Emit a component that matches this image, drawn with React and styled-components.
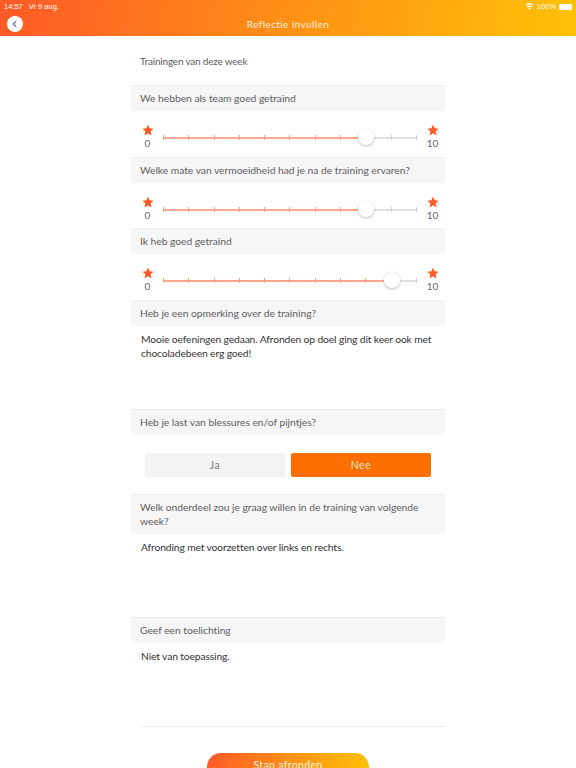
import styled, { createGlobalStyle } from "styled-components"

const GlobalStyle = createGlobalStyle`
html, body {
  margin: 0;
  padding: 0;
  height: 768px;
  overflow: hidden;
  background: white;
}
* { box-sizing: border-box; }
`
const Page = styled.div`
width: 576px;
height: 768px;
overflow: hidden;
font-family: "Lato", "Open Sans", sans-serif;
color: #606060;
`
const Header = styled.header`
height: 36px;
background: linear-gradient(95deg, #ff5a26 0%, #ff9514 55%, #ffc107 100%);
color: white;
position: relative;
`
const StatusBar = styled.div`
height: 12px;
padding: 1px 4px 0 4px;
display: flex;
justify-content: space-between;
align-items: center;
font-family: "Liberation Sans", sans-serif;
font-size: 7.5px;
color: #fff;
`
const StatusLeft = styled.div`
display: flex;
gap: 6px;
`
const StatusRight = styled.div`
display: flex;
align-items: center;
gap: 3px;
`
const Battery = styled.div`
width: 13px;
height: 6px;
border-radius: 1.5px;
background: white;
`
const HeaderRow = styled.div`
height: 23px;
display: flex;
align-items: center;
justify-content: center;
`
const Title = styled.div`
font-size: 10px;
letter-spacing: 0.4px;
color: #fff3df;
`
const BackButton = styled.button`
position: absolute;
left: 7px;
top: 16px;
width: 16px;
height: 16px;
border-radius: 50%;
border: none;
padding: 0;
background: white;
display: flex;
align-items: center;
justify-content: center;
`
const Content = styled.main`
width: 314px;
margin: 0 auto 0 131px;
`
const Intro = styled.div`
height: 49px;
padding: 19px 0 0 9px;
font-size: 10px;
line-height: 13px;
letter-spacing: -0.2px;
`
const Label = styled.div`
background: #f6f6f6;
border-top: 1px solid #ededed;
padding: 5px 18px 6px 9px;
font-size: 10.3px;
line-height: 14px;
letter-spacing: -0.03px;
`
const SliderRow = styled.div`
height: ${(p) => p.$height}px;
display: flex;
align-items: flex-start;
padding: 13px 6px 0 10px;
`
const StarColumn = styled.div`
width: 13px;
display: flex;
flex-direction: column;
align-items: center;
font-size: 10px;
line-height: 12px;
color: #666;
svg { display: block; margin-bottom: 1px; }
`
const Track = styled.div`
position: relative;
flex: 1;
height: 1.5px;
margin: 13px 9px 0 9px;
background: #e0e0e0;
display: flex;
justify-content: space-between;
`
const TrackFill = styled.div`
position: absolute;
left: 0;
top: 0;
height: 1.5px;
background: #ffa78f;
`
const Tick = styled.span`
position: relative;
width: 1px;
height: 5px;
margin-top: -1.75px;
background: ${(p) => (p.$on ? "#ff9a80" : "#cfcfcf")};
`
const Thumb = styled.span`
position: absolute;
top: -8px;
width: 16px;
height: 16px;
margin-left: -8px;
border-radius: 50%;
background: white;
box-shadow: 0 1px 3px rgba(0, 0, 0, 0.28);
`
const Answer = styled.div`
height: ${(p) => p.$height}px;
padding: ${(p) => p.$top}px 6px 0 10px;
font-size: 10.3px;
line-height: 14px;
letter-spacing: -0.13px;
color: #333;
`
const ButtonRow = styled.div`
height: 59px;
padding: 18px 14px 0 14px;
display: flex;
gap: 6px;
`
const Choice = styled.button`
flex: 1;
height: 24px;
border: none;
border-radius: 2px;
font-family: inherit;
font-size: 10.5px;
letter-spacing: 0.5px;
background: ${(p) => (p.$active ? "#ff6f00" : "#f3f3f3")};
color: ${(p) => (p.$active ? "#ffe3cc" : "#777")};
`
const Divider = styled.div`
height: 1px;
margin-left: 9px;
background: #ededed;
`
const Footer = styled.div`
display: flex;
justify-content: center;
padding: 26px 0 0 0;
`
const SubmitButton = styled.button`
width: 162px;
height: 40px;
border: none;
border-radius: 14px;
padding: 6px 0 0 0;
align-self: flex-start;
display: flex;
justify-content: center;
font-family: inherit;
font-size: 10.5px;
line-height: 13px;
letter-spacing: 0.35px;
color: #fff3df;
background: linear-gradient(95deg, #ff5a26 0%, #ff9514 55%, #ffc107 100%);
`

const Star = () => (
  <svg width="12" height="12" viewBox="0 0 24 24" fill="#ff5a26">
    <path d="M12 1l3.2 7.6 8.3.7-6.3 5.4 1.9 8.1L12 18.5 4.9 22.8l1.9-8.1L.5 9.3l8.3-.7z" />
  </svg>
)

const Slider = ({ value, height = 46 }) => {
  const pct = (value / 10) * 100
  return (
    <SliderRow $height={height}>
      <StarColumn>
        <Star />
        0
      </StarColumn>
      <Track>
        <TrackFill style={{ width: `${pct}%` }} />
        {Array.from({ length: 11 }, (_, i) => (
          <Tick key={i} $on={i <= value} />
        ))}
        <Thumb style={{ left: `${pct}%` }} />
      </Track>
      <StarColumn>
        <Star />
        10
      </StarColumn>
    </SliderRow>
  )
}

export default function App() {
  return (
    <Page>
      <GlobalStyle />
      <Header>
        <StatusBar>
          <StatusLeft>
            <span>14:57</span>
            <span>Vr 9 aug.</span>
          </StatusLeft>
          <StatusRight>
            <svg width="9" height="7" viewBox="0 0 18 14" fill="white">
              <path d="M9 14L6.4 10.6a4.4 4.4 0 0 1 5.2 0z" />
              <path d="M5.2 9.1L3.6 7a9 9 0 0 1 10.8 0l-1.6 2.1a6.4 6.4 0 0 0-7.6 0z" />
              <path d="M2.4 5.4L.8 3.3a13.6 13.6 0 0 1 16.4 0l-1.6 2.1a11 11 0 0 0-13.2 0z" />
            </svg>
            <span>100%</span>
            <Battery />
          </StatusRight>
        </StatusBar>
        <HeaderRow>
          <Title>Reflectie invullen</Title>
        </HeaderRow>
        <BackButton>
          <svg width="8" height="8" viewBox="0 0 8 8" fill="none" stroke="#5c6bc0" strokeWidth="1.2">
            <path d="M5.2 1.2L2.4 4l2.8 2.8" />
          </svg>
        </BackButton>
      </Header>
      <Content>
        <Intro>Trainingen van deze week</Intro>
        <Label>We hebben als team goed getraind</Label>
        <Slider value={8} />
        <Label>Welke mate van vermoeidheid had je na de training ervaren?</Label>
        <Slider value={8} height={45} />
        <Label>Ik heb goed getraind</Label>
        <Slider value={9} />
        <Label>Heb je een opmerking over de training?</Label>
        <Answer $height={83} $top={6}>
          Mooie oefeningen gedaan. Afronden op doel ging dit keer ook met chocoladebeen erg goed!
        </Answer>
        <Label>Heb je last van blessures en/of pijntjes?</Label>
        <ButtonRow>
          <Choice>Ja</Choice>
          <Choice $active>Nee</Choice>
        </ButtonRow>
        <Label>Welk onderdeel zou je graag willen in de training van volgende week?</Label>
        <Answer $height={83} $top={6}>Afronding met voorzetten over links en rechts.</Answer>
        <Label>Geef een toelichting</Label>
        <Answer $height={83} $top={6}>Niet van toepassing.</Answer>
        <Divider />
      </Content>
      <Footer>
        <SubmitButton>Stap afronden</SubmitButton>
      </Footer>
    </Page>
  )
}
